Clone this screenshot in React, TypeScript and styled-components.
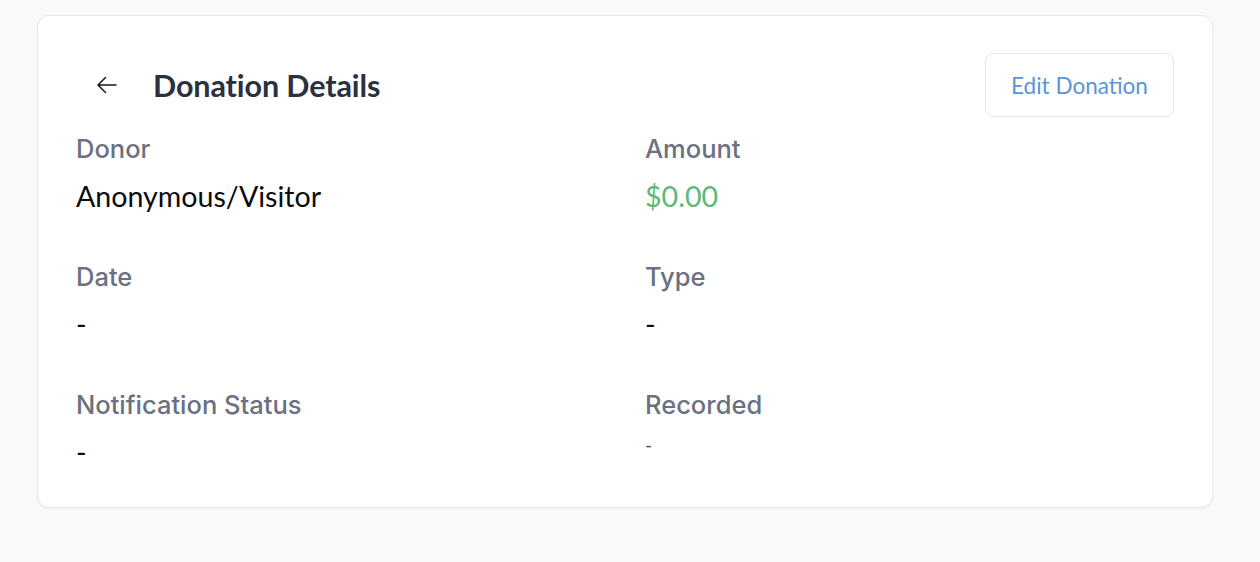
import React from "react";
import styled, { createGlobalStyle } from "styled-components";

const Global = createGlobalStyle`
  html, body { margin: 0; padding: 0; background: #f8f9fb; }
  body { font-family: Lato, "Noto Sans", sans-serif; -webkit-font-smoothing: antialiased; }
  * { box-sizing: border-box; }
`;

const Page = styled.div`
  width: 1260px;
  height: 562px;
  padding: 15px 47px 0 37px;
  background: #f8f9fb;
`;

const Card = styled.section`
  width: 1176px;
  height: 493px;
  background: #ffffff;
  border: 1px solid #e6e8ec;
  border-radius: 12px;
  box-shadow: 0 1px 2px rgba(16, 24, 40, 0.05);
  padding: 37px 38px 0 38px;
`;

const Header = styled.header`
  display: flex;
  align-items: center;
  justify-content: space-between;
  height: 64px;
  margin-bottom: 17px;
`;

const TitleGroup = styled.div`
  display: flex;
  align-items: center;
  gap: 22px;
`;

const BackButton = styled.button`
  display: flex;
  align-items: center;
  justify-content: center;
  width: 48px;
  height: 48px;
  margin-left: 7px;
  border: none;
  background: transparent;
  padding: 0;
  color: #111827;
  cursor: pointer;
`;

const Title = styled.h1`
  margin: 0;
  font-family: Lato, sans-serif;
  font-weight: 700;
  font-size: 30.5px;
  letter-spacing: -0.1px;
  color: #2a3140;
`;

const EditButton = styled.button`
  width: 189px;
  height: 64px;
  border: 1px solid #e3e6eb;
  border-radius: 8px;
  background: #ffffff;
  font-family: Lato, sans-serif;
  font-size: 22.5px;
  color: #5a95da;
  cursor: pointer;
`;

const Grid = styled.div`
  display: grid;
  grid-template-columns: 1fr 1fr;
  column-gap: 40px;
  row-gap: 49px;
`;

const Field = styled.div`
  display: flex;
  flex-direction: column;
  gap: 15px;
`;

const Label = styled.div`
  font-family: Inter, sans-serif;
  font-weight: 500;
  font-size: 25.5px;
  line-height: 30px;
  color: #6b7180;
`;

const Value = styled.div<{ $tone?: "default" | "green" | "muted" }>`
  font-family: Lato, sans-serif;
  font-size: ${(p) => (p.$tone === "muted" ? "19px" : "28.6px")};
  line-height: ${(p) => (p.$tone === "muted" ? "20px" : "34px")};
  color: ${(p) =>
    p.$tone === "green" ? "#5cb979" : p.$tone === "muted" ? "#4b5563" : "#0b0b0f"};
`;

const ArrowLeft = () => (
  <svg width="24" height="24" viewBox="0 0 24 24" fill="none" stroke="currentColor" strokeWidth="1.5" strokeLinecap="round" strokeLinejoin="round">
    <path d="M10.5 19.5 3 12m0 0 7.5-7.5M3 12h18" />
  </svg>
);

const fields: { label: string; value: string; tone?: "default" | "green" | "muted" }[] = [
  { label: "Donor", value: "Anonymous/Visitor" },
  { label: "Amount", value: "$0.00", tone: "green" },
  { label: "Date", value: "-" },
  { label: "Type", value: "-" },
  { label: "Notification Status", value: "-" },
  { label: "Recorded", value: "-", tone: "muted" },
];

export default function App() {
  return (
    <>
      <Global />
      <Page>
        <Card>
          <Header>
            <TitleGroup>
              <BackButton aria-label="Back">
                <ArrowLeft />
              </BackButton>
              <Title>Donation Details</Title>
            </TitleGroup>
            <EditButton>Edit Donation</EditButton>
          </Header>
          <Grid>
            {fields.map((f) => (
              <Field key={f.label}>
                <Label>{f.label}</Label>
                <Value $tone={f.tone}>{f.value}</Value>
              </Field>
            ))}
          </Grid>
        </Card>
      </Page>
    </>
  );
}
